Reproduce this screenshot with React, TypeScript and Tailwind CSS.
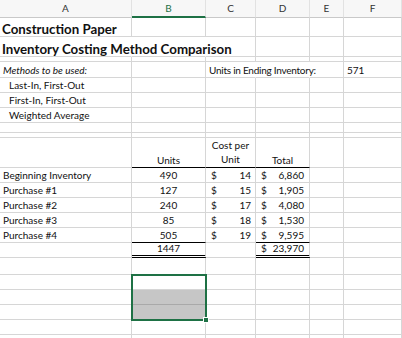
import React from "react";

const COLS = [132, 74, 50, 54, 34, 58];

type CellSpec = {
  content?: React.ReactNode;
  cls?: string;
};

type RowSpec = { h: number; cells: (CellSpec | null)[] };

const acct = (n: string, padL: string, padR: string) => (
  <div className={`flex w-full justify-between ${padL} ${padR}`}>
    <span>$</span>
    <span>{n}</span>
  </div>
);

const emptyRow = (h: number): RowSpec => ({ h, cells: [null, null, null, null, null, null] });

const data: [string, string, string, string][] = [
  ["Beginning Inventory", "490", "14", "6,860"],
  ["Purchase #1", "127", "15", "1,905"],
  ["Purchase #2", "240", "17", "4,080"],
  ["Purchase #3", "85", "18", "1,530"],
  ["Purchase #4", "505", "19", "9,595"],
];

const rows: RowSpec[] = [
  {
    h: 19,
    cells: [
      { content: <span className="text-[13.3px] font-bold whitespace-nowrap">Construction Paper</span>, cls: "pl-[2px] pb-[1px]" },
      null, null, null, null, null,
    ],
  },
  {
    h: 20,
    cells: [
      { content: <span className="text-[13.3px] font-bold whitespace-nowrap">Inventory Costing Method Comparison</span>, cls: "pl-[2px] pb-[1px] overflow-visible z-10 border-r-transparent" },
      { cls: "border-r-transparent" },
      null,
      null,
      null,
      null,
    ],
  },
  emptyRow(5),
  {
    h: 16,
    cells: [
      { content: <span className="italic">Methods to be used:</span>, cls: "pl-[3px]" },
      null,
      { content: <span className="whitespace-nowrap tracking-[-0.25px]">Units in Ending Inventory:</span>, cls: "pl-[3px] overflow-visible z-10 border-r-transparent" },
      { cls: "border-r-transparent" },
      null,
      { content: "571", cls: "pl-[3px]" },
    ],
  },
  { h: 15, cells: [{ content: "Last-In, First-Out", cls: "pl-[9px]" }, null, null, null, null, null] },
  { h: 15, cells: [{ content: "First-In, First-Out", cls: "pl-[9px]" }, null, null, null, null, null] },
  { h: 15, cells: [{ content: "Weighted Average", cls: "pl-[9px]" }, null, null, null, null, null] },
  emptyRow(10),
  emptyRow(5),
  {
    h: 30,
    cells: [
      null,
      { content: "Units", cls: "justify-center border-b-black" },
      {
        content: (
          <div className="flex flex-col items-center leading-[14px]">
            <span>Cost per</span>
            <span>Unit</span>
          </div>
        ),
        cls: "justify-center border-b-black",
      },
      { content: "Total", cls: "justify-center border-b-black" },
      null,
      null,
    ],
  },
  ...data.map(([label, u, c, t], i): RowSpec => ({
    h: 15,
    cells: [
      { content: label, cls: "pl-[3px]" },
      { content: u, cls: `justify-center ${i === 4 ? "border-b-black" : ""}` },
      { content: acct(c, "pl-[5px]", "pr-[4px]") },
      { content: acct(t, "pl-[5px]", "pr-[5px]"), cls: i === 4 ? "border-b-black" : "" },
      null,
      null,
    ],
  })),
  {
    h: 15,
    cells: [
      null,
      { content: "1447", cls: "justify-center border-b-[3px] border-double border-b-black" },
      null,
      {
        content: (
          <div className="flex w-full pl-[5px] pr-[5px] justify-between">
            <span>$</span>
            <span>23,970</span>
          </div>
        ),
        cls: "border-b-[3px] border-double border-b-black",
      },
      null,
      null,
    ],
  },
  emptyRow(17),
  emptyRow(15),
  emptyRow(15),
  emptyRow(15),
  emptyRow(15),
  emptyRow(15),
];

function Header() {
  const letters = ["A", "B", "C", "D", "E", "F"];
  return (
    <div className="flex h-[18px] bg-[#f7f7f7]">
      {letters.map((l, i) => (
        <div
          key={l}
          style={{ width: COLS[i] }}
          className={`flex shrink-0 items-center justify-center border-r border-[#e2e2e2] text-[10px] ${
            l === "B"
              ? "border-b-2 border-b-[#1e7145] text-[#1e7145]"
              : "border-b border-b-[#c9c9c9] text-[#333]"
          }`}
        >
          {l}
        </div>
      ))}
    </div>
  );
}

export default function App() {
  return (
    <div
      className="relative h-[338px] w-[402px] overflow-hidden bg-white text-[10px] text-[#111]"
      style={{ fontFamily: "Lato, 'Open Sans', sans-serif" }}
    >
      <Header />
      {rows.map((r, ri) => (
        <div key={ri} className="flex" style={{ height: r.h }}>
          {r.cells.map((c, ci) => (
            <div
              key={ci}
              style={{ width: COLS[ci] }}
              className={`relative flex shrink-0 items-end whitespace-nowrap border-b border-r border-[#d6d6d6] pb-[1px] leading-[12px] ${
                c?.cls ?? ""
              }`}
            >
              {c?.content}
            </div>
          ))}
        </div>
      ))}
      {/* selection overlay */}
      <div className="absolute left-[131px] top-[274px] h-[47px] w-[76px] border-2 border-[#1e7145]">
        <div className="absolute left-0 right-0 top-[14px] bottom-0 bg-[#c6c6c6]">
          <div className="absolute left-0 right-0 top-[14px] h-px bg-[#a9a9a9]" />
        </div>
        <div className="absolute -bottom-[4px] -right-[4px] h-[6px] w-[6px] border border-white bg-[#1e7145]" />
      </div>
    </div>
  );
}
